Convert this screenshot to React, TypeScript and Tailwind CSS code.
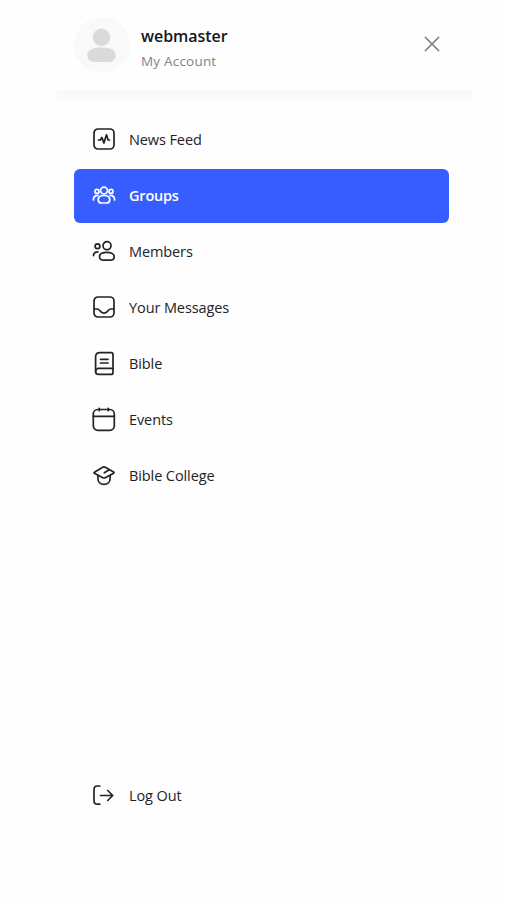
import type { ReactNode } from 'react'
import { clsx } from 'clsx'

const ICONS: Record<string, ReactNode> = {
  feed: (
    <>
      <rect x="2" y="1" width="20" height="20" rx="4" />
      <path d="M6.500 12h1.900l1.500-2.600 2 5.600 2.600-8.200 1.600 5.200h1.400" />
    </>
  ),
  groups: (
    <>
      <circle cx="12" cy="6.500" r="3.400" />
      <path d="M6.200 15.700c0-2.700 2.500-4.200 5.800-4.200s5.800 1.500 5.800 4.200c0 2-1.300 3.300-3.300 3.300h-5c-2 0-3.300-1.300-3.300-3.300z" />
      <circle cx="5" cy="7.400" r="2" />
      <circle cx="19" cy="7.400" r="2" />
      <path d="M1.400 16c0-3 1.400-4.600 4.600-4.600M22.600 16c0-3-1.400-4.600-4.600-4.600" />
    </>
  ),
  members: (
    <>
      <circle cx="15" cy="5.700" r="4" />
      <path d="M7.500 16.700c0-2.900 3.100-4.400 7.300-4.400s7.400 1.500 7.400 4.400c0 2.200-1.700 3.500-3.900 3.500h-6.900c-2.200 0-3.900-1.300-3.900-3.500z" />
      <circle cx="5.500" cy="6.200" r="2.400" />
      <path d="M1.500 15.600c.1-2.300 1.700-3.700 4.300-3.700" />
    </>
  ),
  messages: (
    <>
      <rect x="2" y="1" width="20" height="20" rx="4" />
      <path d="M2 13h3.200c1.400 0 1.900.7 2.700 1.800 1 1.400 2.200 2.300 4.100 2.300s3.100-.9 4.100-2.300c.8-1.100 1.300-1.800 2.700-1.800H22" />
    </>
  ),
  bible: (
    <>
      <path d="M21 16.400V2.200C21 1.200 20.400.7 19.400.7H8C5 .7 3.600 2 3.600 5v14" />
      <path d="M21 16.400H6.600a3 3 0 0 0 0 6H19c1.300 0 2-.7 2-2z" />
      <path d="M8.500 7.300h7.500M8.500 11h7.500" />
    </>
  ),
  events: (
    <>
      <rect x="1.300" y="1.500" width="21" height="20.800" rx="4.500" />
      <path d="M1.300 8.300h21M7.300 .3v2.400M16.300 .3v2.400" />
    </>
  ),
  college: (
    <>
      <path d="M2.400 8.200 10.300 3.400c1.200-.7 2.200-.7 3.400 0l7.900 4.500c.6.400.6.900 0 1.300l-7.900 4.300c-1.200.7-2.200.7-3.400 0L2.400 9.300c-.6-.4-.6-.8 0-1.100z" />
      <path d="M5.900 11.500v3c0 3.700 2.600 5.900 6.100 5.900s6.100-2.200 6.100-5.900v-3M12.300 8.800l4.600-2.800" />
    </>
  ),
  logout: (
    <>
      <path d="M7.800 2H5.500C3 2 2 3 2 5.500v11.200c0 2.500 1 3.500 3.500 3.500h2.300" />
      <path d="M8.500 11.500h12.200M15.700 6.500l5 5-5 5" />
    </>
  ),
}

const NAV = [
  { label: 'News Feed',     icon: 'feed' },
  { label: 'Groups',        icon: 'groups' },
  { label: 'Members',       icon: 'members' },
  { label: 'Your Messages', icon: 'messages' },
  { label: 'Bible',         icon: 'bible' },
  { label: 'Events',        icon: 'events' },
  { label: 'Bible College', icon: 'college' },
]

function NavItem({ label, icon, active = false }: { label: string; icon: string; active?: boolean }) {
  return (
    <a
      href="#"
      className={clsx(
        'flex h-[54px] w-full items-center rounded-md pl-[18px]',
        active ? 'bg-[#385dff] font-semibold text-white' : 'text-[#222228]'
      )}
    >
      <svg
        viewBox="0 0 24 24"
        className="size-6 shrink-0 overflow-visible"
        fill="none"
        stroke="currentColor"
        strokeWidth="1.7"
        strokeLinecap="round"
        strokeLinejoin="round"
      >
        {ICONS[icon]}
      </svg>
      <span className={clsx('ml-[13px] text-[14.5px]', active ? 'tracking-[-0.2px]' : 'tracking-[-0.1px]')}>
        {label}
      </span>
    </a>
  )
}

export default function App() {
  const active = 'Groups'

  return (
    <div className="min-h-[900px] bg-[#fefefe] font-['Open_Sans','Noto_Sans',sans-serif]">
      <aside className="ml-[57px] flex h-[900px] w-[415px] flex-col">
        {/* Account header */}
        <header className="flex h-[90px] shrink-0 items-center pr-8 pl-[17px]">
          <svg viewBox="0 0 56 56" className="size-14 shrink-0">
            <circle cx="28" cy="28" r="28" fill="#f9f9f9" />
            <circle cx="27.500" cy="20.300" r="8.700" fill="#d9dadb" />
            <path d="M13.300 38c0-5 5.500-7.400 14.200-7.400s14.200 2.400 14.200 7.400c0 4.200-3 7-7 7H20.300c-4 0-7-2.800-7-7z" fill="#d9dadb" />
          </svg>
          <div className="mt-[7px] ml-[11px] flex-1">
            <p className="text-base leading-[26px] font-semibold tracking-[-0.05px] text-[#15151c]">webmaster</p>
            <p className="text-[13.5px] leading-[25px] font-medium tracking-[0.2px] text-[#838385]">My Account</p>
          </div>
          <button aria-label="Close">
            <svg viewBox="0 0 16 16" className="-mt-0.5 size-4" stroke="#7c8082" strokeWidth="1.7" strokeLinecap="round">
              <path d="M1.500 1.500l13 13M14.500 1.500l-13 13" />
            </svg>
          </button>
        </header>
        <div className="h-[14px] shrink-0 bg-linear-to-b from-[#f8f8f8] to-[#fefefe]" />

        {/* Nav */}
        <nav className="mt-[9px] flex w-[392px] flex-col gap-0.5 pl-[17px]">
          {NAV.map(item => (
            <NavItem key={item.label} {...item} active={item.label === active} />
          ))}
        </nav>

        <div className="mt-auto mb-[77px] w-[392px] pl-[17px]">
          <NavItem label="Log Out" icon="logout" />
        </div>
      </aside>
    </div>
  )
}
